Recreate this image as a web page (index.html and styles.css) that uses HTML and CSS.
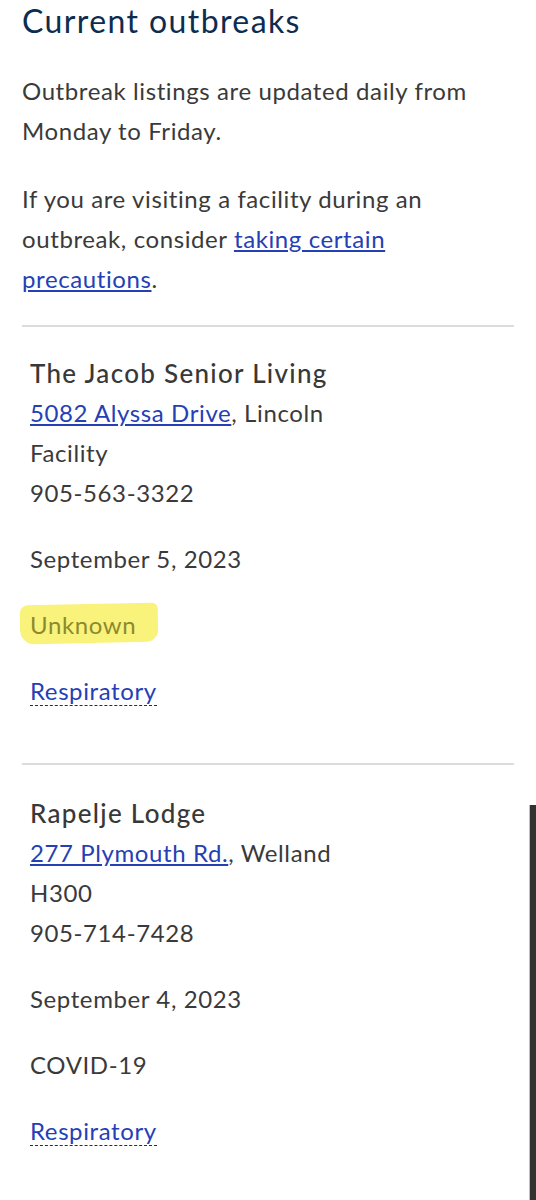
FILE: index.html
```html
<!doctype html>
<!--
Liste der aktuellen Ausbrüche in Einrichtungen.
-->
<html>
<head>
    <meta charset="utf-8">
    <title>Current outbreaks</title>
    <meta name="viewport" content="width=device-width, initial-scale=1">
    <link rel="stylesheet" href="styles.css">
</head>

<body>
<h1 class="title">Current outbreaks</h1>

<p class="intro">Outbreak listings are updated daily from Monday to Friday.</p>
<p class="intro">If you are visiting a facility during an outbreak, consider <a href="#">taking certain precautions</a>.</p>

<div class="outbreak">
    <h2 class="facility-name">The Jacob Senior Living</h2>
    <p class="lines">
        <a href="#">5082 Alyssa Drive</a>, Lincoln<br>
        Facility<br>
        905-563-3322
    </p>
    <p class="line">September 5, 2023</p>
    <p class="line"><span class="highlight">Unknown</span></p>
    <p class="line"><span class="type">Respiratory</span></p>
</div>

<div class="outbreak">
    <h2 class="facility-name">Rapelje Lodge</h2>
    <p class="lines">
        <a href="#">277 Plymouth Rd.</a>, Welland<br>
        H300<br>
        905-714-7428
    </p>
    <p class="line">September 4, 2023</p>
    <p class="line">COVID-19</p>
    <p class="line"><span class="type">Respiratory</span></p>
    <p class="line more">Outbreak declared</p>
</div>

<!-- Scrollbalken des Handys, liegt über dem Inhalt -->
<div class="scrollbar"></div>
</body>
</html>
```

FILE: styles.css
```css
body {
    margin: 0;
    padding: 1px 22px 0;
    background: #ffffff;
    color: #3a3a3a;
    font-family: "Lato", "Noto Sans", sans-serif;
    font-size: 24px;
    line-height: 40px;
    letter-spacing: 0.6px;
}

a {
    color: #2540b5;
}

.title {
    margin: 0 0 30px;
    font-size: 32px;
    font-weight: 400;
    line-height: 40px;
    letter-spacing: 1.4px;
    color: #0c2d50;
}

.intro {
    margin: 0 0 28px;
}

.intro:last-of-type {
    margin-bottom: 26px;
}

/* Ein Eintrag pro Einrichtung, getrennt durch eine graue Linie */
.outbreak {
    border-top: 2px solid #dcdcdc;
    padding: 26px 8px 26px;
}

.outbreak + .outbreak {
    padding-top: 28px;
}

.facility-name {
    margin: 0;
    font-size: 26px;
    font-weight: 500;
    line-height: 40px;
    letter-spacing: 1.3px;
    color: #383838;
}

.lines,
.line {
    margin: 0 0 26px;
}

.more {
    margin-top: 44px;
}

.type {
    color: #2540b5;
    border-bottom: 1px dashed #2a2a3a;
}

.highlight {
    /* Markierung mit Textmarker */
    position: relative;
    isolation: isolate;
    color: #8c8a2e;
}

.highlight::before {
    content: "";
    position: absolute;
    left: -10px;
    right: -22px;
    top: -6px;
    bottom: -4px;
    background: #f9f27b;
    border-radius: 8px 6px 12px 14px;
    transform: rotate(-1.2deg);
    z-index: -1;
}

.scrollbar {
    position: fixed;
    right: 0;
    top: 805px;
    bottom: 0;
    width: 6px;
    background: #333333;
    border-left: 1px solid #bdbdbd;
}
```
